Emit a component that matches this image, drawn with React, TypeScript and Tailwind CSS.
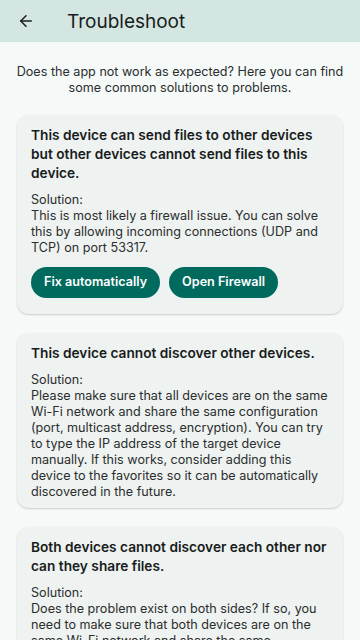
import { ArrowLeft } from "lucide-react";

const font = { fontFamily: "Inter, 'Noto Sans', sans-serif" };

type Issue = {
  title: string;
  body: string;
  actions?: string[];
};

const issues: Issue[] = [
  {
    title:
      "This device can send files to other devices but other devices cannot send files to this device.",
    body: "This is most likely a firewall issue. You can solve this by allowing incoming connections (UDP and TCP) on port 53317.",
    actions: ["Fix automatically", "Open Firewall"],
  },
  {
    title: "This device cannot discover other devices.",
    body: "Please make sure that all devices are on the same Wi-Fi network and share the same configuration (port, multicast address, encryption). You can try to type the IP address of the target device manually. If this works, consider adding this device to the favorites so it can be automatically discovered in the future.",
  },
  {
    title: "Both devices cannot discover each other nor can they share files.",
    body: "Does the problem exist on both sides? If so, you need to make sure that both devices are on the same Wi-Fi network and share the same configuration (port, multicast address, encryption).",
  },
];

function IssueCard({ issue }: { issue: Issue }) {
  return (
    <div className="rounded-xl bg-[#eef2f1] px-[14px] pt-[11px] pb-[8px] shadow-[0_1px_2px_rgba(0,0,0,0.18)]">
      <h2 className="-mr-[4px] text-[13.7px] font-semibold leading-[19px] text-[#191c1b]">
        {issue.title}
      </h2>
      <p className="mt-[9px] text-[12.6px] leading-[16px] text-[#2a2e2d]">
        Solution:
        <br />
        {issue.body}
      </p>
      {issue.actions && (
        <div className="mt-[11px] mb-[8px] flex gap-[9px]">
          {issue.actions.map((a) => (
            <button
              key={a}
              className="h-[31px] rounded-full bg-[#006a5e] px-[13px] text-[12.6px] font-semibold text-white"
            >
              {a}
            </button>
          ))}
        </div>
      )}
    </div>
  );
}

export default function App() {
  return (
    <div
      className="h-[640px] w-[360px] overflow-hidden bg-[#f5f9f8] text-[#191c1b]"
      style={font}
    >
      <header className="flex h-[42px] items-center bg-[#d4e6e1]">
        <ArrowLeft className="ml-[17px] h-[18px] w-[18px]" strokeWidth={2} />
        <h1 className="ml-[32px] text-[19px] leading-none text-[#191c1b]">
          Troubleshoot
        </h1>
      </header>
      <p className="mt-[22px] px-4 text-center text-[12.6px] leading-[16px] text-[#2a2e2d]">
        Does the app not work as expected? Here you can find some common
        solutions to problems.
      </p>
      <div className="mt-[19px] flex flex-col gap-[19px] px-[17px]">
        {issues.map((i) => (
          <IssueCard key={i.title} issue={i} />
        ))}
      </div>
    </div>
  );
}
